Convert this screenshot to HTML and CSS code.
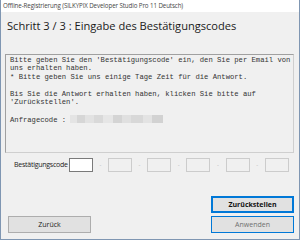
FILE: index.html
```html
<!DOCTYPE html>
<html lang="de">
<head>
  <meta charset="UTF-8" />
  <title>Offline-Registrierung</title>
  <link rel="stylesheet" href="styles.css">
</head>
<body>
  <div class="window">
    <div class="titlebar">Offline-Registrierung (SILKYPIX Developer Studio Pro 11 Deutsch)</div>
    <div class="content">
      <h1>Schritt 3 / 3 : Eingabe des Bestätigungscodes</h1>
      <div class="message">
        <div class="line">Bitte geben Sie den 'Bestätigungscode' ein, den Sie per Email von</div>
        <div class="line">uns erhalten haben.</div>
        <div class="line">* Bitte geben Sie uns einige Tage Zeit für die Antwort.</div>
        <div class="line">&nbsp;</div>
        <div class="line">Bis Sie die Antwort erhalten haben, klicken Sie bitte auf</div>
        <div class="line">'Zurückstellen'.</div>
        <div class="line">&nbsp;</div>
        <div class="line">Anfragecode : <span class="blurred"></span></div>
      </div>
      <div class="code-row">
        <span class="code-label">Bestätigungscode</span>
        <input class="code-box active" type="text">
        <span class="dash">-</span>
        <input class="code-box" type="text" disabled>
        <span class="dash">-</span>
        <input class="code-box" type="text" disabled>
        <span class="dash">-</span>
        <input class="code-box" type="text" disabled>
        <span class="dash">-</span>
        <input class="code-box" type="text" disabled>
        <span class="dash">-</span>
        <input class="code-box" type="text" disabled>
      </div>
      <div class="footer">
        <button class="btn">Zurück</button>
        <div class="right-buttons">
          <button class="btn primary">Zurückstellen</button>
          <button class="btn focus muted">Anwenden</button>
        </div>
      </div>
    </div>
  </div>
</body>
</html>
```

FILE: styles.css
```css
body {
  margin: 0;
  padding: 0;
  font-family: 'Open Sans', 'Noto Sans', sans-serif;
  background-color: #ffffff;
}

.window {
  width: 298px;
  height: 239px;
  border-left: 1px solid #7f96b2;
  border-right: 1px solid #7f96b2;
  border-bottom: 1px solid #7f96b2;
  background-color: #f0f0f0;
  display: flex;
  flex-direction: column;
}

.titlebar {
  height: 12px;
  background-color: #ffffff;
  font-size: 6.2px;
  line-height: 12px;
  color: #444;
  padding-left: 2px;
  white-space: nowrap;
  overflow: hidden;
  letter-spacing: -0.1px;
}

.content {
  flex: 1;
  display: flex;
  flex-direction: column;
  padding: 0 5px 0 4px;
}

h1 {
  margin: 6px 0 0 2px;
  font-size: 11.1px;
  font-weight: normal;
  color: #1a1a1a;
  line-height: 16px;
  white-space: nowrap;
}

.message {
  margin-top: 20px;
  height: 93px;
  border: 1px solid #a0a0a0;
  border-right-color: #cfcfcf;
  border-bottom-color: #cfcfcf;
  padding: 1px 0 3px 4px;
  font-family: 'Liberation Mono', 'Courier New', monospace;
  font-size: 7.2px;
  line-height: 8.4px;
  color: #333;
}

.line {
  white-space: pre;
  height: 8.4px;
}

.blurred {
  display: inline-block;
  width: 93px;
  height: 8px;
  vertical-align: -1px;
  background: linear-gradient(90deg, #e4e4e4 0 8%, #d6d6d6 8% 16%, #e2e2e2 16% 26%, #d9d9d9 26% 36%, #e6e6e6 36% 46%, #d4d4d4 46% 56%, #e0e0e0 56% 66%, #d8d8d8 66% 78%, #e3e3e3 78% 88%, #d2d2d2 88% 100%);
}

.code-row {
  display: flex;
  align-items: center;
  margin-top: 4px;
  height: 15px;
}

.code-label {
  font-size: 7px;
  color: #222;
  margin-left: 9px;
  margin-right: 1px;
  letter-spacing: -0.25px;
  white-space: nowrap;
}

.code-box {
  width: 24px;
  height: 14px;
  box-sizing: border-box;
  margin: 0;
  padding: 0;
  border: 1px solid #cccccc;
  background-color: #f0f0f0;
  outline: none;
}

.code-box.active {
  background-color: #ffffff;
  border-color: #7a7a7a;
}

.dash {
  width: 15.2px;
  text-align: center;
  font-size: 6px;
  color: #b0b0b0;
}

.footer {
  display: flex;
  justify-content: space-between;
  align-items: flex-end;
  margin-top: 24px;
}

.right-buttons {
  display: flex;
  flex-direction: column;
  gap: 3px;
}

.btn {
  width: 83px;
  height: 17px;
  margin: 0;
  padding: 0;
  box-sizing: border-box;
  border: 1px solid #adadad;
  background-color: #e1e1e1;
  font-family: 'Open Sans', 'Noto Sans', sans-serif;
  font-size: 7px;
  color: #222;
}

.footer > .btn {
  margin-left: 3px;
}

.btn.primary {
  border: 2px solid #0078d7;
  font-weight: bold;
  color: #111;
}

.btn.focus {
  border: 1px solid #0078d7;
}

.btn.muted {
  color: #707070;
}
```
